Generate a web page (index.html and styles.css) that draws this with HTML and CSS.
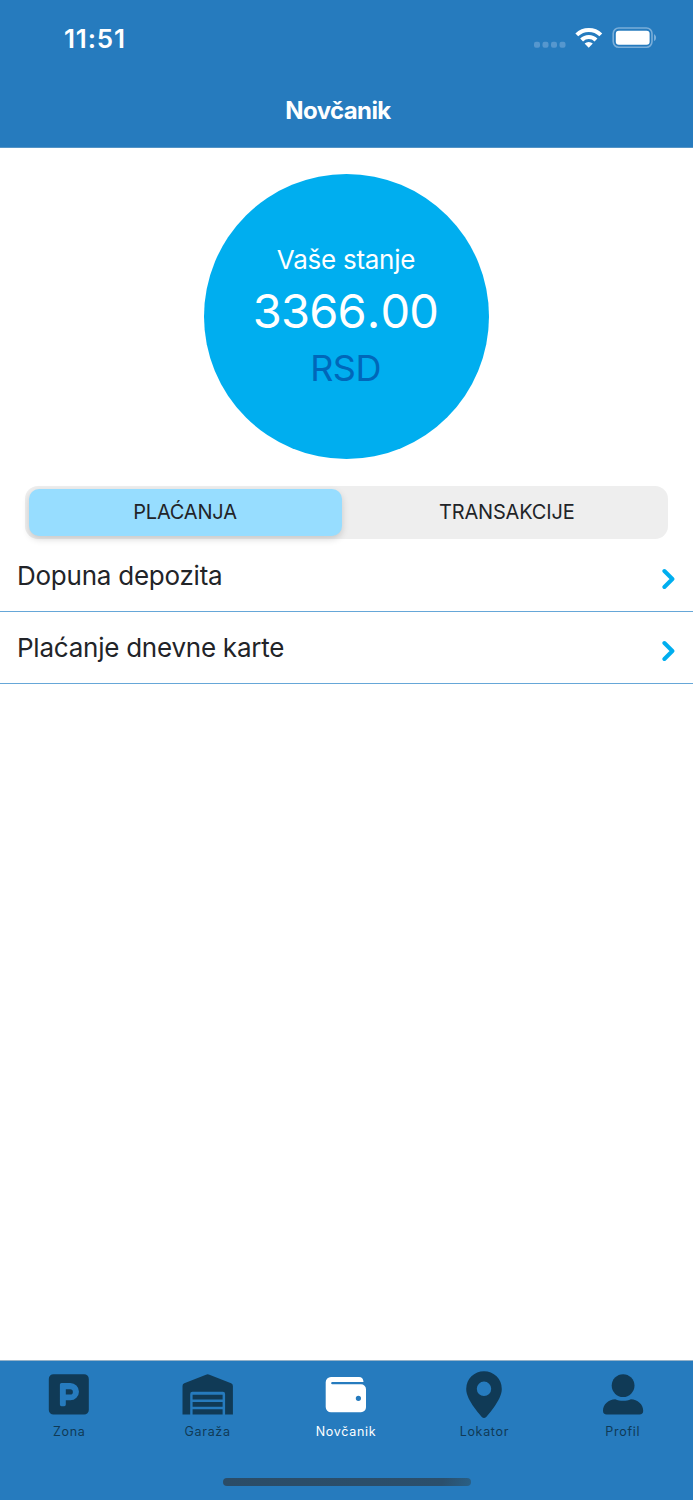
FILE: index.html
```
<!DOCTYPE html>
<html lang="sr">
<head>
<meta charset="utf-8">
<title>Novčanik</title>
<link rel="stylesheet" href="styles.css">
</head>
<body>
<div class="app">
  <header class="header">
    <div class="status">
      <span class="time">11:51</span>
      <svg class="status-icons" width="124" height="24" viewBox="533 26 124 24">
        <g fill="#5697ce"><rect x="534" y="41.8" width="6" height="6" rx="2"/><rect x="542.5" y="41.8" width="6" height="6" rx="2"/><rect x="551" y="41.8" width="6" height="6" rx="2"/><rect x="559.5" y="41.8" width="6" height="6" rx="2"/></g>
        <g fill="none" stroke="#fff" stroke-width="4.1"><path d="M576.8 34.9a17.2 17.2 0 0 1 24 0"/><path d="M581.6 40a10.3 10.3 0 0 1 14.4 0"/></g>
        <path d="M584.6 43.6a6 6 0 0 1 8.2 0l-4.1 4.2z" fill="#fff"/>
        <rect x="613.2" y="28" width="38.8" height="19.2" rx="5.6" fill="none" stroke="#7aaed9" stroke-width="1.6"/>
        <rect x="615.8" y="30.8" width="33.8" height="14" rx="3" fill="#fff"/>
        <path d="M654 34.2c2.8 1.2 2.8 5.6 0 6.8z" fill="#7aaed9"/>
      </svg>
    </div>
    <h1 class="title">Novčanik</h1>
  </header>
  <main class="content">
    <section class="balance">
      <span class="balance-label">Vaše stanje</span>
      <span class="balance-value">3366<span class="point">.</span>00</span>
      <span class="balance-currency">RSD</span>
    </section>
    <div class="segments">
      <div class="segment segment-active"><span>PLAĆANJA</span></div>
      <div class="segment segment-idle"><span>TRANSAKCIJE</span></div>
    </div>
    <div class="list">
      <div class="row"><span>Dopuna depozita</span>
        <svg class="chevron" width="14" height="22" viewBox="0 0 14 22"><path d="M2.4 3l8 8-8 8"/></svg></div>
      <div class="row"><span>Plaćanje dnevne karte</span>
        <svg class="chevron" width="14" height="22" viewBox="0 0 14 22"><path d="M2.4 3l8 8-8 8"/></svg></div>
    </div>
  </main>
  <footer class="footer">
    <nav class="tabs">
      <div class="tab">
        <svg width="60" height="50" viewBox="39 1370 60 50"><path fill="currentColor" fill-rule="evenodd" d="M53.5 1374.2h30.6a4.7 4.7 0 0 1 4.7 4.7v31a4.7 4.7 0 0 1-4.7 4.7H53.5a4.7 4.7 0 0 1-4.7-4.7v-31a4.7 4.7 0 0 1 4.7-4.7zM61.5 1383a1.6 1.6 0 0 0-1.6 1.6v20a1.6 1.6 0 0 0 1.6 1.6h2.7a1.6 1.6 0 0 0 1.6-1.6v-4.3h4.5a8.65 8.65 0 0 0 0-17.3zM65.8 1389.2h4.4a2.7 2.7 0 0 1 0 5.4h-4.4z"/></svg>
        <span>Zona</span>
      </div>
      <div class="tab">
        <svg width="60" height="50" viewBox="178 1370 60 50"><g fill="currentColor"><path d="M182.5 1414.6V1386q0-2 1.8-2.8l21.7-8.5q1.7-.7 3.4 0l21.7 8.5q1.8.8 1.8 2.8v28.6h-7.8V1394q0-2.2-2.2-2.2h-30.5q-2.2 0-2.2 2.2v20.6z"/><path d="M192.6 1394.8h30v4.6h-30zM192.6 1402h30v4.8h-30zM192.6 1409.2h30v5.4h-30z"/></g></svg>
        <span>Garaža</span>
      </div>
      <div class="tab tab-active">
        <svg width="60" height="50" viewBox="316 1370 60 50"><path fill="currentColor" fill-rule="evenodd" d="M331 1377h28q4.2 0 4.5 5h-31.2a1.1 1.1 0 0 0 0 2.3H361a5 5 0 0 1 5 5v18a5 5 0 0 1-5 5h-30a5.3 5.3 0 0 1-5.3-5.3v-24.7a5.3 5.3 0 0 1 5.3-5.3zM358.4 1395.7a2.6 2.6 0 1 0 0 5.2 2.6 2.6 0 0 0 0-5.2z"/></svg>
        <span>Novčanik</span>
      </div>
      <div class="tab">
        <svg width="60" height="50" viewBox="454 1370 60 50"><path fill="currentColor" fill-rule="evenodd" d="M484 1371.2a17.7 17.7 0 0 1 17.8 17.7c0 6-3.7 12.2-8 18.6q-3.5 5-7.6 9.5-2.2 2-4.4 0-4.1-4.5-7.6-9.5c-4.3-6.4-8-12.6-8-18.6a17.7 17.7 0 0 1 17.8-17.7zM484 1381.6a7.2 7.2 0 1 0 0 14.4 7.2 7.2 0 0 0 0-14.4z"/></svg>
        <span>Lokator</span>
      </div>
      <div class="tab">
        <svg width="60" height="50" viewBox="593 1370 60 50"><g fill="currentColor"><circle cx="623.1" cy="1385.6" r="11.4"/><path d="M615.3 1399.2c4.6 2.1 11 2.1 15.6 0 6.6 0 12.3 5.2 12.3 11.6q0 3.8-3.8 3.8h-32.6q-3.8 0-3.8-3.8c0-6.4 5.7-11.6 12.3-11.6z"/></g></svg>
        <span>Profil</span>
      </div>
    </nav>
    <div class="home-indicator"></div>
  </footer>
</div>
</body>
</html>
```
FILE: styles.css
```
* { box-sizing: border-box; }
body { margin: 0; font-family: Inter, "Liberation Sans", sans-serif; background: #fff; color: #222428; }
.app { width: 693px; height: 1500px; display: flex; flex-direction: column; overflow: hidden; }
.header { height: 148px; background: #267bbe; color: #fff; border-bottom: 1px solid #5494c6; }
.status { height: 76px; padding: 0 36px 0 64px; display: flex; justify-content: space-between; align-items: center; }
.time { padding-top: 1px; font-size: 26px; font-weight: 600; line-height: 32px; letter-spacing: .85px; }
.title { margin: 19px 0 0; padding-right: 17px; text-align: center; font-size: 24px; font-weight: 700; line-height: 32px; letter-spacing: -.6px; }
.content { flex: 1; display: flex; flex-direction: column; }
.balance { width: 285px; height: 285px; margin: 26px auto 0; padding-top: 70px; border-radius: 50%; background: #00aeef; color: #fff; display: flex; flex-direction: column; align-items: center; }
.balance-label { padding-right: 1px; font-size: 26px; line-height: 32px; letter-spacing: -.26px; }
.balance-value { padding-right: 2px; font-size: 47px; line-height: 70px; letter-spacing: -.85px; }
.point { padding: 0 1px; }
.balance-currency { padding-right: 2px; font-size: 36px; line-height: 44px; letter-spacing: -.5px; color: #0067b9; }
.segments { height: 53px; margin: 27px 25px 0; padding: 3px 3px 3px 3.5px; display: flex; border-radius: 13px; background: #eee; }
.segment { flex: 1; padding-bottom: 1px; border-radius: 10px; display: flex; align-items: center; justify-content: center; font-size: 20px; letter-spacing: -.18px; }
.segment-active { flex: 0 0 313px; background: #97ddff; box-shadow: 0 3px 7px rgba(0,0,0,.16); }
.segment-idle { padding-left: 7px; }
.list { display: flex; flex-direction: column; }
.row { height: 73px; padding: 1px 17px 0 17px; display: flex; justify-content: space-between; align-items: center; border-bottom: 1px solid #66a7d8; font-size: 26px; line-height: 32px; letter-spacing: -.24px; }
.row:last-child { height: 72px; padding-top: 1px; }
.chevron { margin-top: 6px; fill: none; stroke: #00aeef; stroke-width: 4; stroke-linecap: round; stroke-linejoin: round; }
.footer { height: 140px; background: #267bbe; border-top: 1px solid #96b2c8; }
.tabs { height: 121px; padding: 9px 1px 0 0; display: grid; grid-template-columns: repeat(5, 1fr); color: #103a56; }
.tab { display: flex; flex-direction: column; align-items: center; gap: 3px; font-size: 12.5px; line-height: 18px; letter-spacing: .7px; }
.tab-active { color: #fff; }
.home-indicator { width: 248px; height: 8px; margin: -4px auto 0; border-radius: 4px; background: linear-gradient(110deg, #2b4c67 0%, #2b4f6c 88%, #296087 100%); }
```
